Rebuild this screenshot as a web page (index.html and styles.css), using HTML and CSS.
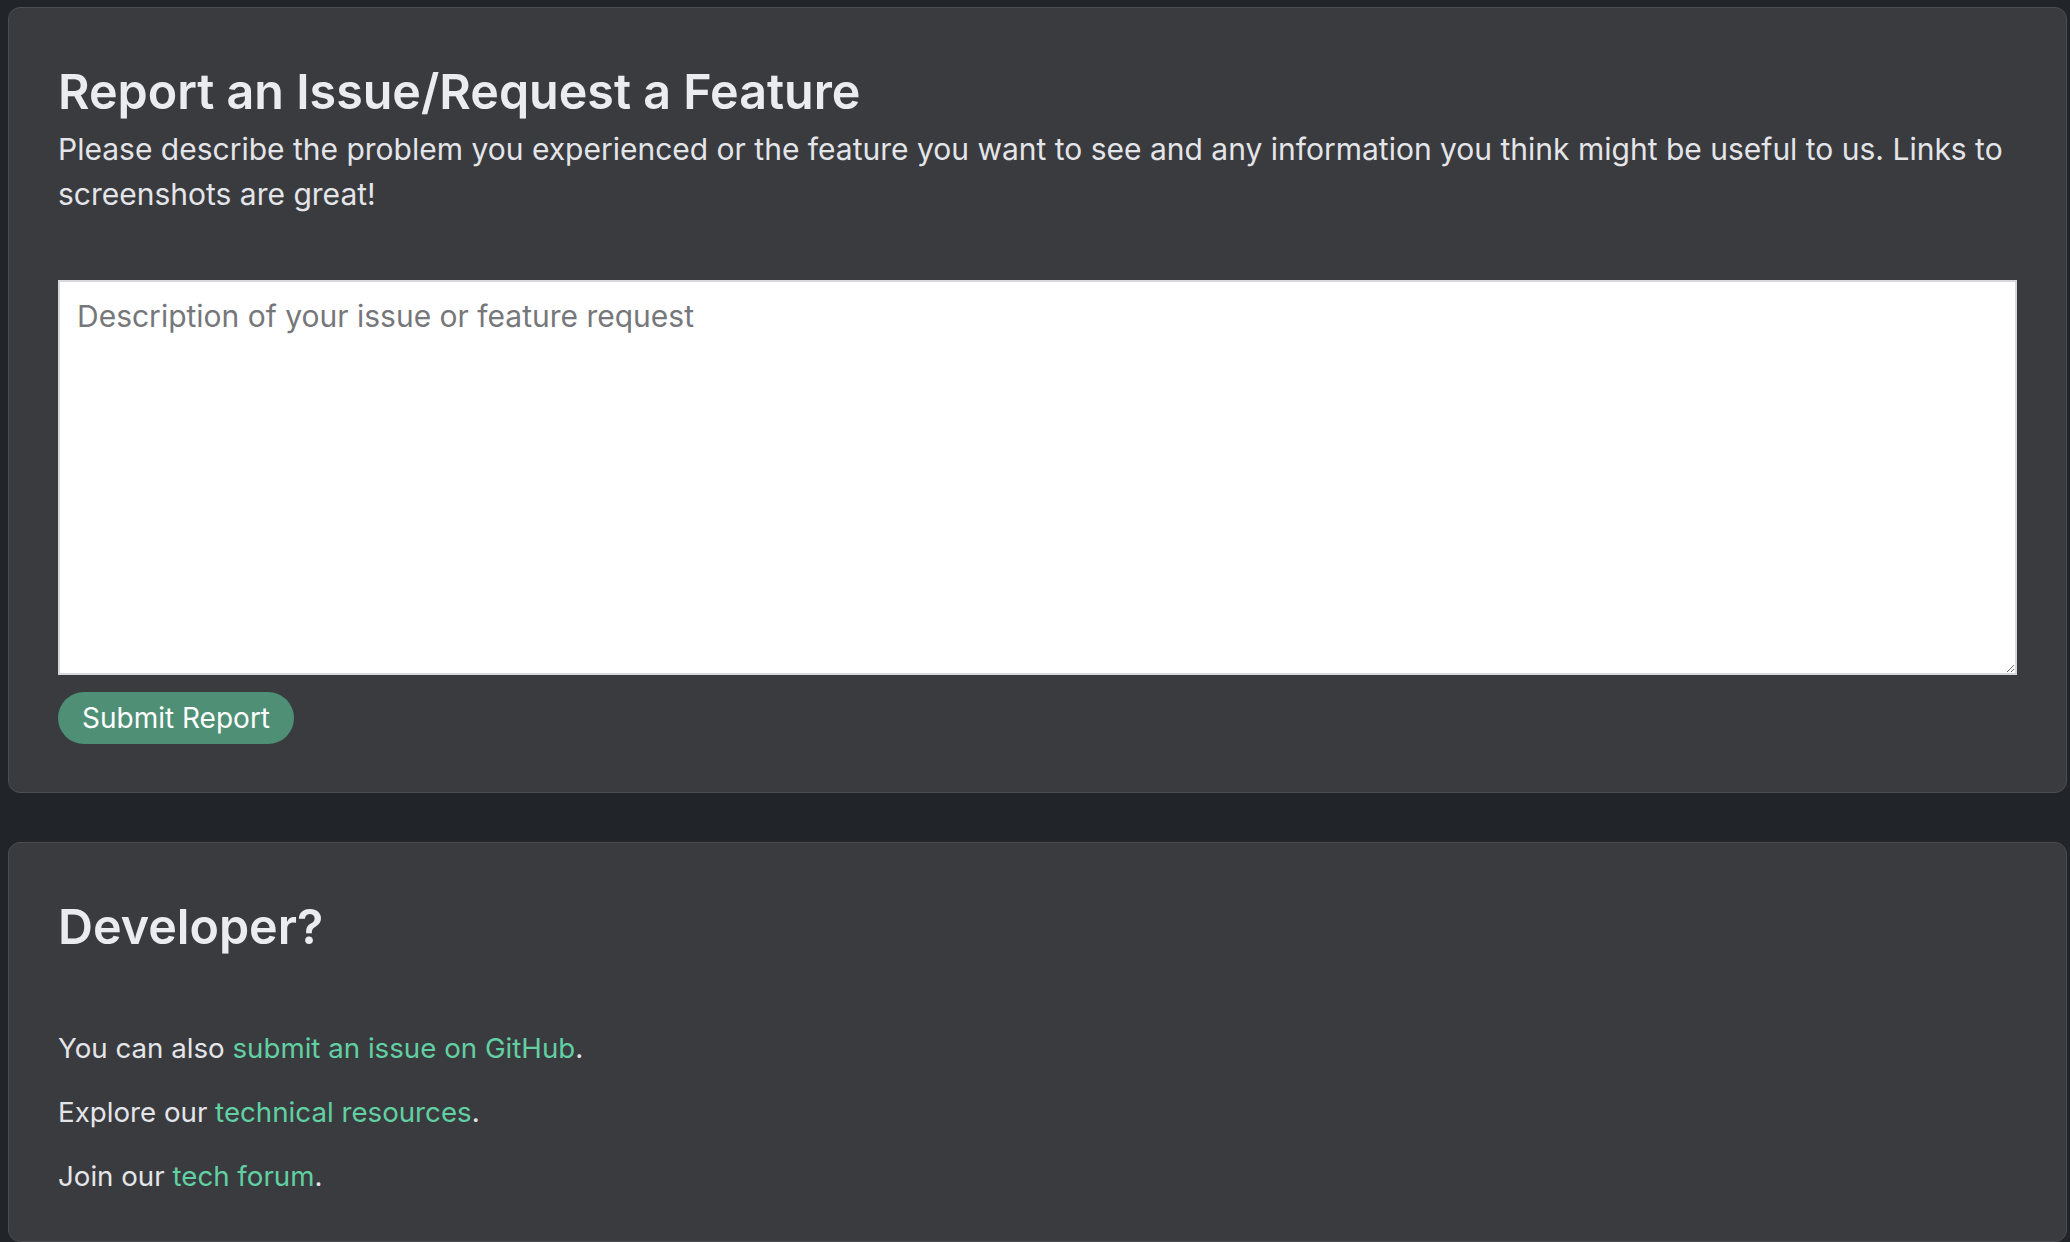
FILE: index.html
```html
<!DOCTYPE html>
<html lang="en">
<head>
<meta charset="utf-8">
<title>Report an Issue</title>
<link rel="stylesheet" href="styles.css">
</head>
<body>
<main class="page">
  <section class="card">
    <h3 class="card-title">Report an Issue/Request a Feature</h3>
    <p class="lead-text">Please describe the problem you experienced or the feature you want to see and any information you think might be useful to us. Links to screenshots are great!</p>
    <form class="report-form">
      <textarea class="report-input" placeholder="Description of your issue or feature request"></textarea>
      <button type="button" class="btn-submit">Submit Report</button>
    </form>
  </section>
  <section class="card card-dev">
    <h3 class="card-title">Developer?</h3>
    <div class="dev-links">
      <p class="dev-line">You can also <a href="#" class="link">submit an issue on GitHub</a>.</p>
      <p class="dev-line">Explore our <a href="#" class="link">technical resources</a>.</p>
      <p class="dev-line">Join our <a href="#" class="link">tech forum</a>.</p>
    </div>
  </section>
</main>
</body>
</html>
```

FILE: styles.css
```css
* { box-sizing: border-box; }

html, body {
  margin: 0;
  padding: 0;
  background: #212429;
  height: 100%;
  overflow: hidden;
}

body {
  font-family: Inter, "Noto Sans", sans-serif;
  font-size: 28px;
  color: #e4e5e9;
}

.page {
  padding: 7px 3px 0 8px;
  display: flex;
  flex-direction: column;
  gap: 49px;
}

.card {
  background: #3a3b3f;
  border: 1px solid #4c4d51;
  border-radius: 12px;
  padding: 54px 49px 48px 49px;
}

.card-title {
  margin: 0;
  font-size: 48.4px;
  font-weight: 600;
  line-height: 59px;
  color: #ebecf0;
}

.lead-text {
  margin: 6px 0 0;
  font-size: 30px;
  line-height: 45px;
  color: #e4e5e9;
}

.report-form {
  margin-top: 63px;
  display: flex;
  flex-direction: column;
  align-items: flex-start;
  gap: 17px;
}

.report-input {
  display: block;
  width: 100%;
  height: 395px;
  border: 2px solid #d6d8db;
  border-radius: 0;
  background: #ffffff;
  padding: 12px 17px 10px;
  font-family: Inter, "Noto Sans", sans-serif;
  font-size: 30px;
  line-height: 45px;
  color: #212529;
  resize: vertical;
}

.report-input::placeholder {
  color: #76777a;
}

.btn-submit {
  height: 52px;
  padding: 0 24px;
  border: none;
  border-radius: 26px;
  background: #4e8f76;
  color: #ffffff;
  font-family: Inter, "Noto Sans", sans-serif;
  font-size: 28px;
  line-height: 52px;
  cursor: pointer;
}

.card-dev {
  padding-bottom: 42px;
}

.dev-links {
  margin-top: 70px;
  display: flex;
  flex-direction: column;
  gap: 19px;
}

.dev-line {
  margin: 0;
  font-size: 27.7px;
  line-height: 45px;
}

.link {
  color: #61d0a2;
  text-decoration: none;
}
```
